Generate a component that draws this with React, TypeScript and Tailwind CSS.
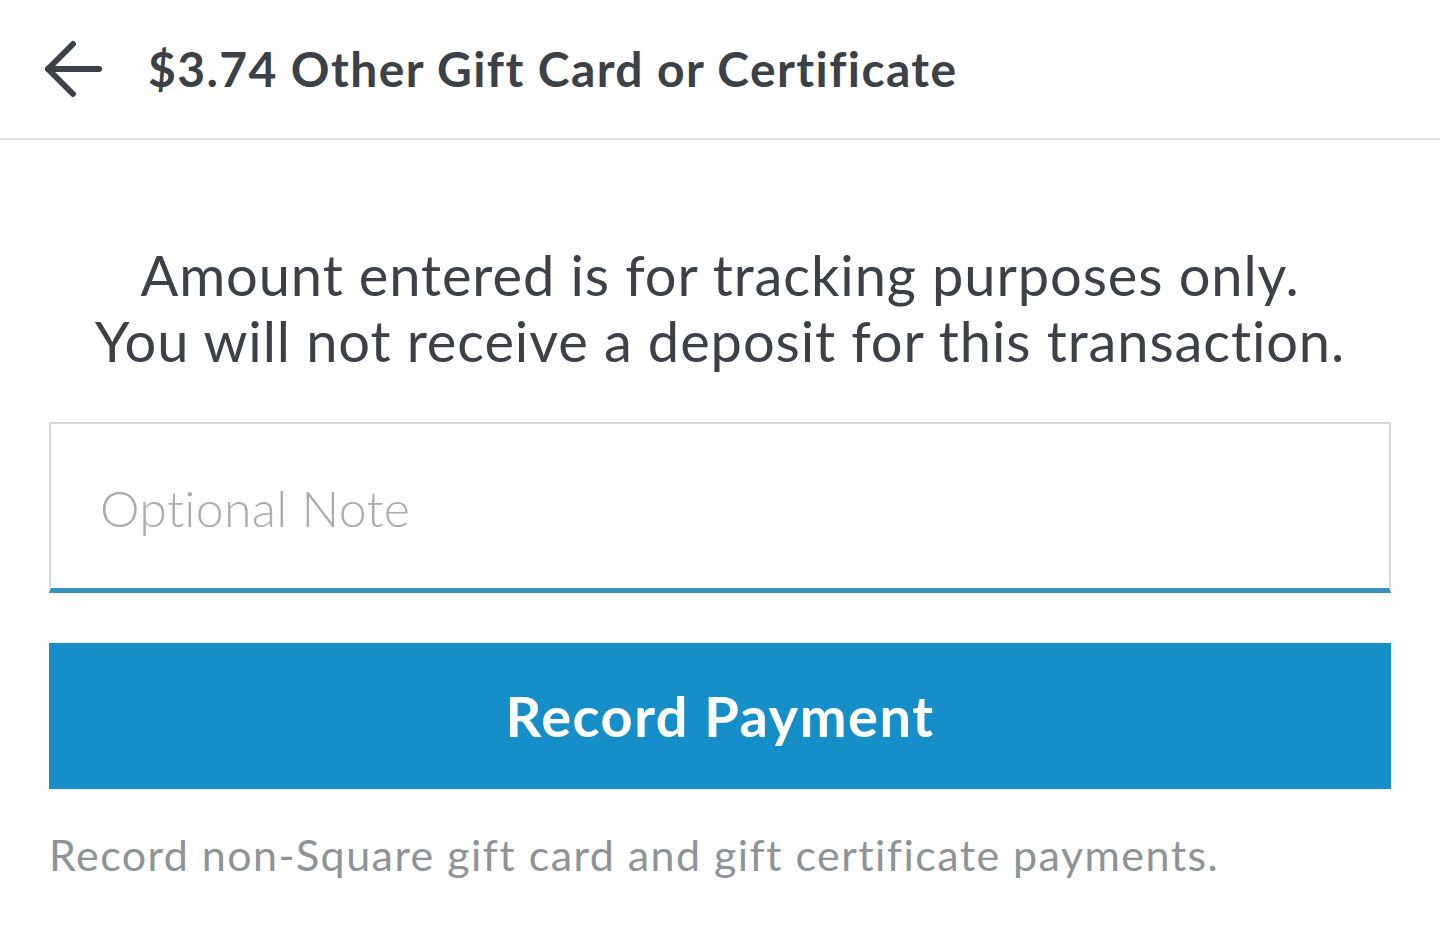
export default function App() {
  return (
    <div className="w-[1440px] h-[950px] bg-white text-[#3b4147]" style={{ fontFamily: 'Lato, "Open Sans", sans-serif' }}>
      {/* Header */}
      <div className="flex items-center h-[140px] border-b-2 border-[#dcdfe0]">
        <div className="w-[148px] flex justify-start pl-[44px]">
          <svg width="58" height="58" viewBox="0 0 58 58" fill="none" stroke="#3b4147" strokeWidth="6" strokeLinecap="round" strokeLinejoin="round">
            <path d="M55 29H4" />
            <path d="M29 4L4 29L29 54" />
          </svg>
        </div>
        <h1 className="text-[48px] font-bold tracking-[1.4px]">$3.74 Other Gift Card or Certificate</h1>
      </div>

      {/* Body */}
      <div className="px-[49px]">
        <p className="mt-[102px] text-center text-[56px] leading-[66px] tracking-[0.9px]">
          Amount entered is for tracking purposes only.
          <br />
          You will not receive a deposit for this transaction.
        </p>

        <div className="mt-[48px] h-[171px] border-2 border-[#d3d8da] border-b-[5px] border-b-[#3391c0] flex items-center pl-[49px] pt-[4px]">
          <span className="text-[50px] font-light text-[#a9adaf] tracking-[0.3px]">Optional Note</span>
        </div>

        <button className="mt-[50px] w-full h-[146px] bg-[#168fc9] text-white text-[56px] font-bold tracking-[1.5px] flex items-center justify-center">
          Record Payment
        </button>

        <p className="mt-[34px] text-[43px] text-[#8e9396] tracking-[1.45px]">
          Record non-Square gift card and gift certificate payments.
        </p>
      </div>
    </div>
  )
}
